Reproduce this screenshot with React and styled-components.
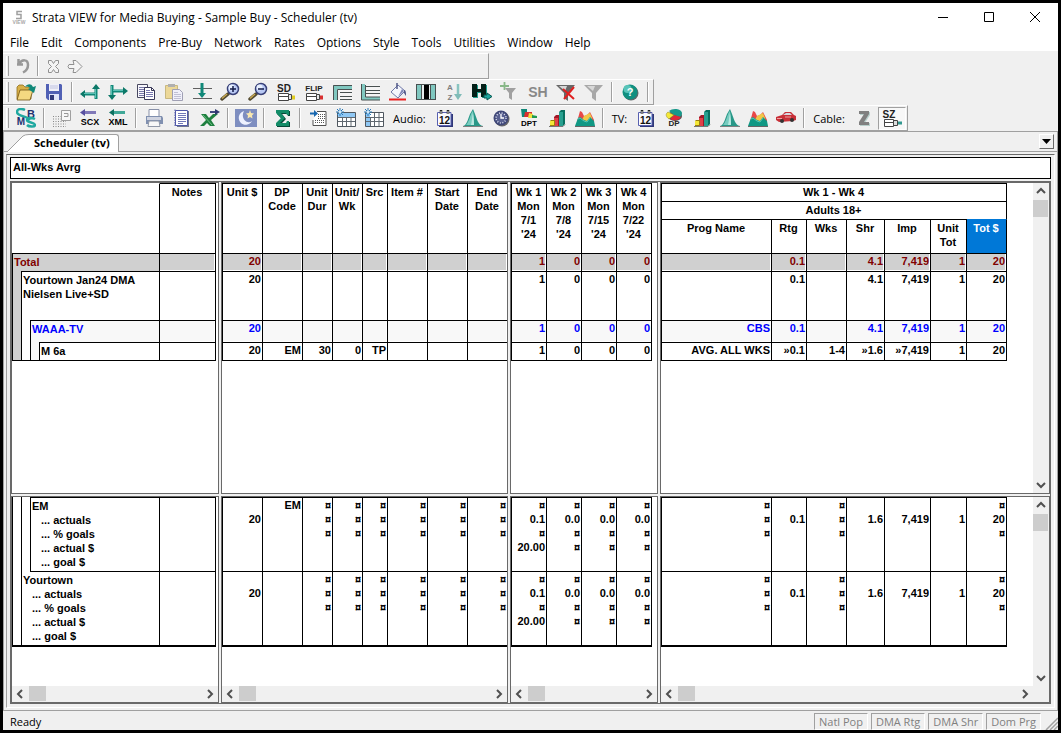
import { useState } from "react";
import styled, { createGlobalStyle, css } from "styled-components";

const GlobalStyle = createGlobalStyle`
  * {
    box-sizing: border-box;
  }
  body {
    margin: 0;
    font-family: "Open Sans", "Noto Sans", sans-serif;
    font-size: 12px;
    color: #000;
  }
  button {
    font: inherit;
    color: inherit;
    border: 0;
    padding: 0;
    background: none;
  }
`;

const Window = styled.div`
  display: flex;
  flex-direction: column;
  height: 100vh;
  border: 3px solid #000;
  background: #f0f0f0;
`;

const TitleBar = styled.header`
  display: flex;
  align-items: center;
  height: 28px;
  padding-left: 8px;
  background: #fff;
`;
const WindowTitle = styled.h1`
  flex: 1;
  margin: 0 0 0 5px;
  font-size: 12px;
  font-weight: 400;
`;
const WindowButton = styled.button`
  display: flex;
  align-items: center;
  justify-content: center;
  width: 46px;
  height: 28px;
`;

const MenuBar = styled.nav`
  display: flex;
  align-items: center;
  height: 20px;
  padding-left: 1px;
  background: #fff;
`;
const MenuItem = styled.button`
  padding: 4px 6px 0;
  line-height: 16px;
`;

const Toolbars = styled.div`
  display: flex;
  flex-direction: column;
  align-items: flex-start;
  padding-top: 2px;
`;
const Bar = styled.div`
  display: flex;
  align-items: center;
  height: 26px;
  min-width: ${(props) => (props.$wide ? "486px" : "0")};
  padding: 0 1px 0 3px;
  border-top: 1px solid #fff;
  border-right: 1px solid #a0a0a0;
  border-bottom: 1px solid #a0a0a0;
`;
const Grip = styled.div`
  width: 3px;
  height: 20px;
  margin-right: 3px;
  border-left: 1px solid #fff;
  border-right: 1px solid #a0a0a0;
`;
const Separator = styled.div`
  width: 2px;
  height: 20px;
  margin: 0 3px;
  border-left: 1px solid #a0a0a0;
  border-right: 1px solid #fff;
`;
const ToolButton = styled.button`
  display: flex;
  align-items: center;
  justify-content: center;
  width: ${(props) => (props.$small ? "22px" : "28px")};
  height: 23px;
  ${(props) =>
    props.$pressed &&
    css`
      background: #f8f8f8;
      border: 1px solid #fff;
      border-top-color: #a0a0a0;
      border-left-color: #a0a0a0;
    `}
`;
const BarLabel = styled.span`
  padding: 0 5px;
  font-size: 11px;
`;

const Workspace = styled.main`
  flex: 1;
  min-height: 0;
  display: flex;
  flex-direction: column;
  border: 1px solid #a0a0a0;
  padding-bottom: 2px;
`;
const TabStrip = styled.div`
  display: flex;
  align-items: flex-end;
  height: 20px;
  padding-left: 3px;
  padding-right: 3px;
  border-bottom: 1px solid #a0a0a0;
`;
const Tab = styled.button`
  display: flex;
  height: 18px;
  margin-bottom: -1px;
`;
const TabLabel = styled.span`
  height: 18px;
  padding: 0 8px 0 5px;
  border-top: 1px solid #a0a0a0;
  border-right: 1px solid #a0a0a0;
  border-top-right-radius: 3px;
  background: #fff;
  font-size: 11px;
  font-weight: 700;
  line-height: 15px;
`;
const TabMenuButton = styled.button`
  display: flex;
  align-items: center;
  justify-content: center;
  width: 15px;
  height: 15px;
  margin: 0 0 2px auto;
  border: 1px solid #696969;
  border-top-color: #fff;
  border-left-color: #fff;
`;

const Client = styled.section`
  flex: 1;
  min-height: 0;
  display: flex;
  flex-direction: column;
  gap: 2px;
  margin: 2px 2px 0;
  padding: 2px 3px 3px;
  border: 1px solid #fff;
  border-top-color: #696969;
  border-left-color: #a0a0a0;
`;
const ViewName = styled.div`
  height: 22px;
  padding-left: 2px;
  border: 1px solid #000;
  background: #fff;
  font: 700 11px/19px "Liberation Sans", Arial, sans-serif;
`;
const Panes = styled.div`
  flex: 1;
  min-height: 0;
  display: grid;
  grid-template-columns: 208px 287px 148px 1fr;
  grid-template-rows: minmax(0, 1fr) 207px;
  gap: 2px;
  border: 1px solid #696969;
`;
const Pane = styled.div`
  display: grid;
  grid-template-columns: minmax(0, 1fr) auto;
  grid-template-rows: minmax(0, 1fr) auto;
  min-width: 0;
  border: 1px solid #696969;
  background: ${(props) => (props.$corner ? "#f0f0f0" : "#fff")};
  overflow: hidden;
`;
const PaneBody = styled.div`
  overflow: hidden;
  background: #fff;
`;

const Track = styled.div`
  display: flex;
  flex-direction: ${(props) => (props.$vertical ? "column" : "row")};
  background: #f0f0f0;
`;
const ArrowButton = styled.button`
  display: flex;
  align-items: center;
  justify-content: center;
  width: 16px;
  height: 16px;
`;
const Thumb = styled.div`
  width: ${(props) => (props.$vertical ? "15px" : "17px")};
  height: ${(props) => (props.$vertical ? "17px" : "15px")};
  margin: ${(props) => (props.$vertical ? "1px 0 auto" : "0 auto 0 1px")};
  background: #cdcdcd;
`;

const Grid = styled.table`
  table-layout: fixed;
  width: ${(props) => props.$width}px;
  border-spacing: 0;
  border-left: ${(props) => (props.$tree ? "0" : "1px solid #000")};
  border-bottom: ${(props) => (props.$thick ? "2px" : "1px")} solid #000;
  font: 700 11px/14px "Liberation Sans", Arial, sans-serif;
`;
const Row = styled.tr`
  height: ${(props) => props.$height}px;
`;
const Head = styled.th`
  padding: 1px 1px 0 0;
  border-top: 1px solid #000;
  border-right: 1px solid #000;
  vertical-align: top;
  white-space: pre-line;
  ${(props) =>
    props.$blank &&
    css`
      border-top-color: #fff;
    `}
  ${(props) =>
    props.$selected &&
    css`
      background: #0078d7;
      border-top-color: #0078d7;
      color: #fff;
    `}
`;

const tones = {
  total: css`
    background-color: #d0d0d0;
    color: #800000;
  `,
  station: css`
    background-color: #f8f8f8;
    color: #0000ff;
  `,
};
const Cell = styled.td`
  padding: 0 1px 0 0;
  border-top: 1px solid #000;
  border-right: 1px solid #000;
  box-shadow: inset -1px -1px #fff;
  text-align: right;
  vertical-align: top;
  white-space: pre;
  ${(props) => tones[props.$tone]}
`;
const TreeCell = styled.td`
  height: inherit;
  padding: 0;
  border-left: 1px solid #000;
  border-right: 1px solid #000;
  vertical-align: top;
`;
const TreeRow = styled.div`
  display: flex;
  height: ${(props) => props.$height}px;
`;
const Level = styled.div`
  width: 9px;
  border-right: 1px solid #000;
  background: ${(props) => props.$color};
`;
const TreeLabel = styled.div`
  flex: 1;
  padding: 2px 0 0 1px;
  background: linear-gradient(#000, #000) ${(props) => (props.$inset ? "8px" : "0")} 0 / 100% 1px
    no-repeat;
  white-space: pre;
  ${(props) => tones[props.$tone]}
`;
const GoalLine = styled.div`
  padding-left: 9px;
`;

const StatusBar = styled.footer`
  display: flex;
  align-items: flex-end;
  gap: 3px;
  height: 19px;
  padding-left: 7px;
`;
const Ready = styled.span`
  flex: 1;
  font-size: 11px;
  line-height: 17px;
`;
const StatusCell = styled.span`
  height: 17px;
  padding: 0 4px;
  border: 1px solid #fff;
  border-top-color: #a0a0a0;
  border-left-color: #a0a0a0;
  color: #808080;
  font-size: 11px;
  line-height: 16px;
`;

const Svg = ({ children, size = 20 }) => (
  <svg width={size} height={size} viewBox={`0 0 ${size} ${size}`} aria-hidden="true">
    {children}
  </svg>
);

const Word = ({ x = 10, y, size = 9, fill = "#222", children }) => (
  <text
    x={x}
    y={y}
    fontSize={size}
    fill={fill}
    textAnchor="middle"
    fontWeight="700"
    fontFamily="Liberation Sans, Arial, sans-serif"
  >
    {children}
  </text>
);

const CalendarIcon = () => (
  <Svg>
    <path d="M4 6h14v13H4z" fill="#303878" />
    <path d="M2.500 4.500h13.500v13H2.500z" fill="#fcfcff" stroke="#5860b0" />
    <path d="M6 2v4M13 2v4" stroke="#222" strokeWidth="2.500" />
    <path d="M6 3v3M13 3v3" stroke="#ddd" />
    <Word x={9.5} y={16} size={10} fill="#111">12</Word>
  </Svg>
);
const BellIcon = () => (
  <Svg>
    <path d="M0 18c4-1 5-7 7-12l3-5 2 5c2 5 3 11 8 12z" fill="#289888" />
    <path d="M3 17c3-3 4-9 6-13l1-1c1 5-1 11 0 14z" fill="#78ccc0" />
    <path d="M8 17c1-4 1-8 2-12 1 4 1 8 1 12z" fill="#b8e8e0" />
    <path d="M0 18.500h20" stroke="#808080" />
  </Svg>
);
const BarsIcon = () => (
  <Svg>
    <path d="M12 4l2-2h4v14l-2 2h-4z" fill="#087060" />
    <path d="M12 4h4v14h-4z" fill="#28a090" />
    <path d="M7 9l2-2h3v11H7z" fill="#a01828" />
    <path d="M7 10h4v8H7z" fill="#e04048" />
    <path d="M3 13l1-1h4v5l-1 1H3z" fill="#988010" />
    <path d="M3 13h4v4H3z" fill="#f4e838" />
    <path d="M2 18.500h14l2-2" fill="none" stroke="#777" />
  </Svg>
);
const HillsIcon = () => (
  <Svg>
    <path d="M2 14L5 3l2 1 2 4 3-1 3-3 4 8v4z" fill="#e84848" />
    <path d="M7 12l2-4 4-2 2-1 2 5 1 6z" fill="#f0c848" />
    <path d="M0 18l3-8 2-1 4 3 3 1 3-4 2 2 2 2 1 5z" fill="#109884" />
    <path d="M3 11l2-1 4 3 3 1 3-4" fill="none" stroke="#58c4b4" />
    <path d="M0 18.500h20" stroke="#666" />
  </Svg>
);
const CalGrid = ({ side }) => (
  <Svg>
    <path d="M1.500 4.500h18v14h-18z" fill="#fff" stroke="#505860" />
    <path d={side ? "M2 5h4v13H2z" : "M2 5h17v4H2z"} fill="#90c8f4" />
    <path d="M2 9.500h17M2 13.500h17M6.500 9v9M10.500 9v9M15 9v9" stroke="#606870" />
    {side && <path d="M10.500 5v4M15 5v4" stroke="#606870" />}
    <path d="M4 0v8M1 1l6 6M7 1L1 7M0 4h8" stroke="#2878b8" />
    <circle cx="4" cy="4" r="1.500" fill="#d0e8fa" />
  </Svg>
);
const Funnel = ({ color, light }) => (
  <>
    <path d="M0 3h19l-7 8v8l-4-3v-5z" fill={color} />
    <path d="M3 4h8L9 9z" fill={light} />
  </>
);
const Magnifier = ({ plus }) => (
  <Svg>
    <path d="M2 17l6-5" stroke="#504830" strokeWidth="3.500" strokeLinecap="round" />
    <path d="M2 16.500l5-4.500" stroke="#c8a850" strokeWidth="1.500" />
    <circle cx="13" cy="7" r="5.500" fill="#b8c8f4" stroke="#384078" strokeWidth="1.500" />
    <circle cx="11.500" cy="5.500" r="3" fill="#e8f0ff" />
    <path d={plus ? "M10 7h6M13 4v6" : "M10 7h6"} stroke="#101848" strokeWidth="1.500" />
  </Svg>
);
const Sheet = ({ mark }) => (
  <>
    <path d="M2.500 11.500h10v7h-10zM3 14.500h9" fill="#fff" stroke="#444" />
    <path d="M12.500 12.500h3v5h-3z" fill="#e8e8e8" stroke="#444" />
    <path d="M16 15.500h3" stroke={mark} strokeWidth="4" />
  </>
);

const icons = {
  undo: (
    <Svg>
      <path d="M5.500 3v6M4 8.500h6M6 8C9 3 15 3 15 9c0 3-2 6-5 7.500" fill="none" stroke="#989898" strokeWidth="2.500" />
    </Svg>
  ),
  cancel: (
    <Svg>
      <path
        d="M5.500 4.500h3l2 3 2-3h3v3l-3 3 3 3v3h-3l-2-3-2 3h-3v-3l3-3-3-3z"
        fill="#f4f4f4"
        stroke="#909090"
      />
    </Svg>
  ),
  next: (
    <Svg>
      <path d="M4 8.500h5l-1-4h3l6 6-6 6H8l1-4H4l-1-2z" fill="#f4f4f4" stroke="#909090" />
    </Svg>
  ),
  open: (
    <Svg>
      <path d="M1 17V5l2-2h4l2 2h6v12z" fill="#d8b048" stroke="#907020" strokeWidth=".8" />
      <path d="M1 18L4 8h13l-3 10z" fill="#f4d880" stroke="#705010" strokeWidth=".8" />
      <path d="M9 5c2-3 6-4 8 0l3-1-2 7-6-4 2-1c-1-1-3-2-5-1z" fill="#108878" />
    </Svg>
  ),
  save: (
    <Svg>
      <path d="M2 2h15l1 1v15H4l-2-2z" fill="#5060b4" />
      <path d="M5 2h10v7H5z" fill="#f0f0f8" />
      <path d="M6 4h8M6 6h8" stroke="#c0c4e0" />
      <path d="M5 12h10v6H5z" fill="#e0e4f8" />
      <path d="M6 13h4v5H6z" fill="#303878" />
    </Svg>
  ),
  arrowUp: (
    <Svg>
      <path d="M16 17V6M2 12h14" stroke="#108878" strokeWidth="3" />
      <path d="M0 12l5-4v8zM16 2l4 5h-8z" fill="#0c7868" />
      <path d="M4 11.500h11M15.500 7v9" stroke="#58c0b4" />
    </Svg>
  ),
  arrowDown: (
    <Svg>
      <path d="M4 3v12M4 9h13" stroke="#108878" strokeWidth="3" />
      <path d="M20 9l-5-4v8zM4 18l4-5H0z" fill="#0c7868" />
      <path d="M5 8.500h10M3.500 4v9" stroke="#58c0b4" />
    </Svg>
  ),
  copy: (
    <Svg>
      <path d="M1.500 2.500h10v13h-10z" fill="#f8f8fc" stroke="#484860" />
      <path d="M3 5.500h6M3 7.500h5M3 9.500h5M3 11.500h5M3 13.500h5" stroke="#7878a8" />
      <path d="M8.500 5.500h7l3 3v9h-10z" fill="#fff" stroke="#383858" />
      <path d="M10 8.500h4M10 10.500h7M10 12.500h7M10 14.500h7" stroke="#7878b0" />
      <path d="M15.500 5.500v3h3" fill="none" stroke="#383858" />
    </Svg>
  ),
  paste: (
    <Svg>
      <path d="M1.500 3.500h12v13h-12z" fill="#ecd898" stroke="#c8b880" />
      <path d="M4 2h7v3H4z" fill="#b0b0b0" />
      <path d="M8.500 7.500h7l3 3v8h-10z" fill="#f0f0fa" stroke="#a0a0b4" />
      <path d="M10 10.500h4M10 12.500h7M10 14.500h7M10 16.500h7" stroke="#c0c0d4" />
    </Svg>
  ),
  split: (
    <Svg>
      <path d="M1 6.500h19M1 16.500h19" stroke="#606060" />
      <path d="M10 1v11" stroke="#108878" strokeWidth="3" />
      <path d="M10 16l-4-5h8z" fill="#108878" />
    </Svg>
  ),
  zoomIn: <Magnifier plus />,
  zoomOut: <Magnifier />,
  sd: (
    <Svg>
      <Sheet mark="#e0cc20" />
      <Word x={8} y={10} size={10}>SD</Word>
    </Svg>
  ),
  flip: (
    <Svg>
      <Sheet mark="#d83030" />
      <Word x={10} y={9} size={8}>FLIP</Word>
    </Svg>
  ),
  rows: (
    <Svg>
      <path d="M1 3h19v4H1zM1 3h4v15H1z" fill="#80c8c0" />
      <path d="M5 7h15v11H5z" fill="#f4f4f4" />
      <path d="M1.500 18V3.500H20M5.500 18V7.500H20M8 10.500h12M8 14.500h12M8 17.500h12" fill="none" stroke="#485050" />
    </Svg>
  ),
  indent: (
    <Svg>
      <path d="M1 2h4v16H1zM1 15h19v3H1z" fill="#80c8c0" />
      <path d="M5 3h15v12H5z" fill="#f4f4f4" />
      <path d="M1.500 2v16H20M5.500 3v12H20M6 4.500h14M6 8.500h14M6 11.500h14" fill="none" stroke="#485050" />
    </Svg>
  ),
  fill: (
    <Svg>
      <path d="M3 10l7-7 7 6-7 7z" fill="#f4f6fc" stroke="#7078a8" />
      <path d="M10 15l6-6-2-2-4 8z" fill="#8088b8" />
      <path d="M9 1v6" stroke="#505888" strokeWidth="1.500" />
      <path d="M16 8c2 0 2 3 2 6l-2-3z" fill="#505888" />
      <path d="M1 17.500h17" stroke="#e82020" strokeWidth="2" />
    </Svg>
  ),
  columns: (
    <Svg>
      <path d="M0 2h20v16H0z" fill="#485050" />
      <path d="M1 3h4v14H1zM15 3h4v14h-4z" fill="#80c8c0" />
      <path d="M6 3h2v14H6zM13 3h1v14h-1z" fill="#e8eeee" />
      <path d="M8 3h5v14H8z" fill="#000" />
    </Svg>
  ),
  sort: (
    <Svg>
      <Word x={6} y={8} size={8} fill="#808080">A</Word>
      <Word x={6} y={18} size={8} fill="#808080">Z</Word>
      <path d="M14 2v12" stroke="#88c4c0" strokeWidth="2.500" />
      <path d="M10 12l4 6 4-6z" fill="#80bcb8" />
    </Svg>
  ),
  header: (
    <Svg>
      <path d="M1 3h5v5h4V3h5v13h-5v-5H6v5H1z" fill="#20a090" />
      <path d="M0 2h5v5h4V2h5v13H9v-5H5v5H0z" fill="#042018" />
      <path d="M12 13h3v-2l5 3.500-5 3.500v-2h-3z" fill="#20a8a0" stroke="#085850" />
    </Svg>
  ),
  addFilter: (
    <Svg>
      <path d="M4.500 0v8M0 4h9" stroke="#88b888" strokeWidth="1.800" />
      <path d="M5 6h11l-4 5v7l-3-2v-5z" fill="#a0a0a0" />
    </Svg>
  ),
  sh: (
    <Svg>
      <Word y={15} size={14} fill="#888">SH</Word>
    </Svg>
  ),
  clearFilter: (
    <Svg>
      <Funnel color="#686868" light="#d8d8d8" />
      <path d="M7 7l11 10M18 5L8 17" stroke="#e02020" strokeWidth="2" />
    </Svg>
  ),
  filter: (
    <Svg>
      <Funnel color="#a8a8a8" light="#d8d8d8" />
    </Svg>
  ),
  help: (
    <Svg>
      <circle cx="11" cy="11" r="7.500" fill="#606868" />
      <circle cx="10" cy="10" r="7.500" fill="#109080" />
      <circle cx="7.500" cy="7" r="4" fill="#58c4b8" />
      <Word y={14} size={11} fill="#fff">?</Word>
    </Svg>
  ),
  sbms: (
    <Svg>
      <Word x={15} y={10} size={11} fill="#203070">B</Word>
      <Word x={5} y={17} size={10} fill="#203070">M</Word>
      <path d="M9 2C5 0 1 1 1 4c0 5 10 3 13 8M19 11c-4-2-8-1-8 1 0 3 8 2 8 5 0 2-6 2-8 0" fill="none" stroke="#20a8a0" strokeWidth="2.500" />
    </Svg>
  ),
  form: (
    <Svg>
      <path d="M9.500 2.500h9v10h-9z" fill="#f8f8f8" stroke="#a0a0a0" />
      <path d="M12 5.500h4v3h-4" fill="none" stroke="#989898" />
      <path d="M1 8.500h8M1 11h8M1 13.500h13M1 16h13M1 18.500h13" stroke="#888" strokeDasharray="1 1.500" />
    </Svg>
  ),
  scx: (
    <Svg>
      <path d="M4 4.500h12" stroke="#8078b8" strokeWidth="3" />
      <path d="M0 4.500L5 1v7z" fill="#5850a0" />
      <Word y={17} size={9} fill="#000">SCX</Word>
    </Svg>
  ),
  xml: (
    <Svg>
      <path d="M4 4.500h13" stroke="#40a898" strokeWidth="3" />
      <path d="M1 4.500L6 1v7z" fill="#0c7060" />
      <Word y={17} size={9} fill="#000">XML</Word>
    </Svg>
  ),
  print: (
    <Svg>
      <path d="M5 8V1.500h10V8" fill="#fff" stroke="#8890a8" />
      <path d="M2 8h16l1 2v6H2z" fill="#8090b0" />
      <path d="M3 9h14v3H3z" fill="#d0d4e0" />
      <path d="M5 13h10l1 5.500H4z" fill="#f8f8f8" stroke="#9098a8" />
    </Svg>
  ),
  page: (
    <Svg>
      <path d="M5 3h12v16H5z" fill="#707890" />
      <path d="M3.500 2.500h12v15h-12z" fill="#fff" stroke="#5058a8" />
      <path d="M3 1.500v17" stroke="#5058a8" strokeDasharray="1.500 1" />
      <path d="M6 5.500h8M6 7.500h8M6 9.500h8M6 11.500h8M6 13.500h8M6 15.500h5" stroke="#7078b8" />
    </Svg>
  ),
  excel: (
    <Svg>
      <path d="M1 6h5l3 4 4-4h5l-7 6 4 6h-5l-3-3-3 3H0l6-6z" fill="#208040" />
      <path d="M3 7l9 10" stroke="#68c080" />
      <path d="M10 4h6" stroke="#404880" strokeWidth="2" />
      <path d="M20 4l-5-3v6z" fill="#303870" />
    </Svg>
  ),
  moon: (
    <svg width="22" height="18" viewBox="0 0 22 18" aria-hidden="true">
      <path d="M0 0h22v18H0z" fill="#7e8ec0" />
      <path d="M9 2a7 7 0 1 0 8 10c-5 4-12-3-8-10z" fill="#eef2ff" />
      <path d="M15 1l1 3 3 .500-2 2 .500 3-2.500-1.500-2.500 1.500.500-3-2-2 3-.500z" fill="#f8e8b0" />
    </svg>
  ),
  sigma: (
    <Svg>
      <path d="M5 3h13v5h-2l-1-2h-5l4 5-5 5h6l1-2h2v5H5v-3l5-5-5-5z" fill="#084838" />
      <path d="M4 2h13v5h-2l-1-2H9l4 5-5 5h6l1-2h2v5H4v-3l5-5-5-5z" fill="#148c68" />
    </Svg>
  ),
  importGrid: (
    <Svg>
      <path d="M9 3.500h9v14H5V12" fill="#fff" stroke="#505050" />
      <path d="M7 14.500h10M7 12.500h10M10 6.500h7M10 8.500h7M10 10.500h7" stroke="#555" strokeDasharray="1 1" />
      <path d="M2 5.500h4" stroke="#1868b0" strokeWidth="2" />
      <path d="M10 5.500L6 2v7z" fill="#1868b0" />
    </Svg>
  ),
  calTop: <CalGrid />,
  calSide: <CalGrid side />,
  calendar: <CalendarIcon />,
  bell: <BellIcon />,
  clock: (
    <Svg>
      <circle cx="11" cy="11" r="7.500" fill="#686868" />
      <circle cx="10" cy="10" r="7.500" fill="#404878" />
      <circle cx="10" cy="10" r="5" fill="#586090" stroke="#e0e4f4" strokeWidth="1.500" strokeDasharray="1 1.620" />
      <path d="M10 6v4h3" fill="none" stroke="#fff" strokeWidth="1.300" />
    </Svg>
  ),
  dpt: (
    <Svg>
      <path d="M2 1h6v8H3z" fill="#108878" />
      <path d="M6 4h7v5H5z" fill="#d83030" />
      <path d="M10 5l4 1v4H9z" fill="#f0e040" />
      <path d="M13 7l5 1v2h-5z" fill="#209850" />
      <Word y={18} size={8} fill="#000">DPT</Word>
    </Svg>
  ),
  bars: <BarsIcon />,
  hills: <HillsIcon />,
  dp: (
    <Svg>
      <ellipse cx="11" cy="8" rx="7" ry="5" fill="#505050" />
      <path d="M10 7L5 3c3-3 12-3 13 2 0 2-1 3-2 4z" fill="#18988a" />
      <path d="M10 7l7 2c-2 4-8 4-11 2z" fill="#e02838" />
      <path d="M10 7L4 4C1 6 2 9 5 11z" fill="#f4e838" stroke="#888020" strokeWidth=".5" />
      <Word y={18} size={8}>DP</Word>
    </Svg>
  ),
  car: (
    <Svg>
      <path d="M0 9l6-2 3-3h6l3 3 2 1v4l-3 1-14 1-3-2z" fill="#c83038" />
      <path d="M7 7l3-2h4l2 2z" fill="#d8d8e0" />
      <path d="M1 10.500h5M9 9h6" stroke="#eea0a0" />
      <circle cx="6" cy="13" r="2" fill="#333" />
      <circle cx="16" cy="12" r="2" fill="#333" />
    </Svg>
  ),
  z: (
    <Svg>
      <path d="M6 4h10v3l-5 8h5v3H6v-3l5-8H6z" fill="#b8d0cc" />
      <path d="M5 3h10v3l-5 8h5v3H5v-3l5-8H5z" fill="#808080" />
    </Svg>
  ),
  sz: (
    <Svg>
      <path d="M2.500 11.500h9v7h-9zM2 14.500h10" fill="#fff" stroke="#444" />
      <path d="M11.500 12.500h4v5h-4z" fill="#ddd" stroke="#444" />
      <path d="M16 15h4" stroke="#309890" strokeWidth="3" />
      <Word x={7} y={10} size={10}>SZ</Word>
    </Svg>
  ),
};

// "|" draws a separator, "Name:" draws a caption
const toolbars = [
  ["undo", "|", "cancel", "next"],
  [
    "open", "save", "|", "arrowUp", "arrowDown", "copy", "paste", "split", "zoomIn", "zoomOut",
    "sd", "flip", "rows", "indent", "fill", "columns", "sort", "header", "addFilter", "sh",
    "clearFilter", "filter", "|", "help", "|",
  ],
  [
    "sbms", "|", "form", "scx", "xml", "|", "print", "page", "excel", "|", "moon", "|", "sigma",
    "|", "importGrid", "calTop", "calSide", "Audio:", "calendar", "bell", "clock", "dpt", "bars",
    "hills", "|", "TV:", "calendar", "dp", "bars", "bell", "hills", "car", "|", "Cable:", "z", "sz",
  ],
];

const menus = [
  "File", "Edit", "Components", "Pre-Buy", "Network", "Rates", "Options", "Style", "Tools",
  "Utilities", "Window", "Help",
];

const rowTypes = [
  { tone: "total", height: 18 },
  { tone: "plain", height: 49 },
  { tone: "station", height: 22 },
  { tone: "plain", height: 18 },
];

const unitPane = {
  widths: [40, 40, 30, 30, 25, 40, 40, 40],
  heads: ["Unit $", "DP\nCode", "Unit\nDur", "Unit/\nWk", "Src", "Item #", "Start\nDate", "End\nDate"],
  rows: [
    ["20", "", "", "", "", "", "", ""],
    ["20", "", "", "", "", "", "", ""],
    ["20", "", "", "", "", "", "", ""],
    ["20", "EM", "30", "0", "TP", "", "", ""],
  ],
  goals: [
    ["\n20", "EM", "¤\n¤\n¤", "¤\n¤\n¤", "¤\n¤\n¤", "¤\n¤\n¤", "¤\n¤\n¤", "¤\n¤\n¤"],
    ["\n20", "", "¤\n¤\n¤", "¤\n¤\n¤", "¤\n¤\n¤", "¤\n¤\n¤", "¤\n¤\n¤", "¤\n¤\n¤"],
  ],
};

const weekGoals = ["¤\n0.1\n¤\n20.00", "¤\n0.0\n¤\n¤", "¤\n0.0\n¤\n¤", "¤\n0.0\n¤\n¤"];
const weekPane = {
  widths: [35, 35, 35, 35],
  heads: ["Wk 1\nMon\n7/1\n'24", "Wk 2\nMon\n7/8\n'24", "Wk 3\nMon\n7/15\n'24", "Wk 4\nMon\n7/22\n'24"],
  rows: Array(4).fill(["1", "0", "0", "0"]),
  goals: [weekGoals, weekGoals],
};

const demoGoals = ["¤\n¤\n¤", "\n0.1", "¤\n¤\n¤", "\n1.6", "\n7,419", "\n1", "¤\n20\n¤"];
const demoPane = {
  widths: [110, 35, 40, 38, 46, 36, 40],
  groups: ["Wk 1 - Wk 4", "Adults 18+"],
  heads: ["Prog Name", "Rtg", "Wks", "Shr", "Imp", "Unit\nTot", "Tot $"],
  selected: "Tot $",
  rows: [
    ["", "0.1", "", "4.1", "7,419", "1", "20"],
    ["", "0.1", "", "4.1", "7,419", "1", "20"],
    ["CBS", "0.1", "", "4.1", "7,419", "1", "20"],
    ["AVG. ALL WKS", "»0.1", "1-4", "»1.6", "»7,419", "1", "20"],
  ],
  goals: [demoGoals, demoGoals],
};

const tree = [
  { label: "Total", levels: [] },
  { label: "Yourtown Jan24 DMA\nNielsen Live+SD", levels: ["#d0d0d0"] },
  { label: "WAAA-TV", levels: ["#d0d0d0", "#fff"] },
  { label: "M 6a", levels: ["#d0d0d0", "#fff", "#f8f8f8"] },
];
const goalTree = [
  { label: "EM", levels: ["#fff", "#fff"] },
  { label: "Yourtown", levels: ["#fff"] },
];
const goalLines = ["... actuals", "... % goals", "... actual $", "... goal $"];

const Columns = ({ widths }) => (
  <colgroup>
    {widths.map((width, i) => (
      <col key={i} width={width} />
    ))}
  </colgroup>
);

const sum = (list) => list.reduce((a, b) => a + b, 0);

const Chevron = ({ dir }) => {
  const paths = {
    up: "M4 10l4-4 4 4",
    down: "M4 6l4 4 4-4",
    left: "M10 4L6 8l4 4",
    right: "M6 4l4 4-4 4",
  };
  return (
    <Svg size={16}>
      <path d={paths[dir]} fill="none" stroke="#505050" strokeWidth="2" />
    </Svg>
  );
};

const ScrollBar = ({ vertical }) => (
  <Track $vertical={vertical}>
    <ArrowButton aria-label={vertical ? "Scroll up" : "Scroll left"}>
      <Chevron dir={vertical ? "up" : "left"} />
    </ArrowButton>
    <Thumb $vertical={vertical} />
    <ArrowButton aria-label={vertical ? "Scroll down" : "Scroll right"}>
      <Chevron dir={vertical ? "down" : "right"} />
    </ArrowButton>
  </Track>
);

const TreeTable = () => (
  <Grid $width={204} $tree>
    <Columns widths={[148, 56]} />
    <thead>
      <Row $height={70}>
        <Head $blank />
        <Head>Notes</Head>
      </Row>
    </thead>
    <tbody>
      {tree.map(({ label, levels }, i) => (
        <Row key={label} $height={rowTypes[i].height}>
          <TreeCell>
            <TreeRow $height={rowTypes[i].height}>
              {levels.map((color, n) => (
                <Level key={n} $color={color} />
              ))}
              <TreeLabel $tone={rowTypes[i].tone}>{label}</TreeLabel>
            </TreeRow>
          </TreeCell>
          <Cell $tone={rowTypes[i].tone} />
        </Row>
      ))}
    </tbody>
  </Grid>
);

const GoalTreeTable = () => (
  <Grid $width={204} $tree $thick>
    <Columns widths={[148, 56]} />
    <tbody>
      {goalTree.map(({ label, levels }, i) => (
        <Row key={label} $height={74}>
          <TreeCell>
            <TreeRow $height={74}>
              {levels.map((color, n) => (
                <Level key={n} $color={color} />
              ))}
              <TreeLabel $inset={i > 0}>
                {label}
                {goalLines.map((line) => (
                  <GoalLine key={line}>{line}</GoalLine>
                ))}
              </TreeLabel>
            </TreeRow>
          </TreeCell>
          <Cell />
        </Row>
      ))}
    </tbody>
  </Grid>
);

const DataTable = ({ pane }) => (
  <Grid $width={sum(pane.widths) + 1}>
    <Columns widths={pane.widths} />
    <thead>
      {pane.groups?.map((group) => (
        <Row key={group} $height={18}>
          <Head colSpan={pane.widths.length}>{group}</Head>
        </Row>
      ))}
      <Row $height={pane.groups ? 34 : 70}>
        {pane.heads.map((head) => (
          <Head key={head} $selected={head === pane.selected}>
            {head}
          </Head>
        ))}
      </Row>
    </thead>
    <tbody>
      {pane.rows.map((row, i) => (
        <Row key={i} $height={rowTypes[i].height}>
          {row.map((value, n) => (
            <Cell key={n} $tone={rowTypes[i].tone}>
              {value}
            </Cell>
          ))}
        </Row>
      ))}
    </tbody>
  </Grid>
);

const GoalTable = ({ pane }) => (
  <Grid $width={sum(pane.widths) + 1} $thick>
    <Columns widths={pane.widths} />
    <tbody>
      {pane.goals.map((row, i) => (
        <Row key={i} $height={74}>
          {row.map((value, n) => (
            <Cell key={n}>{value}</Cell>
          ))}
        </Row>
      ))}
    </tbody>
  </Grid>
);

const App = () => {
  const [sizeMode, setSizeMode] = useState(true);

  return (
    <Window>
      <GlobalStyle />
      <TitleBar>
        <svg width="16" height="18" viewBox="0 0 16 18" aria-hidden="true">
          <path d="M11 3.500H6v3h4v4H5" fill="none" stroke="#a0a0a0" strokeWidth="1.500" />
          <Word x={8} y={16} size={5} fill="#a8a8a8">VIEW</Word>
        </svg>
        <WindowTitle>Strata VIEW for Media Buying - Sample Buy - Scheduler (tv)</WindowTitle>
        <WindowButton aria-label="Minimize">
          <Svg size={12}>
            <path d="M1 6.500h10" stroke="#000" />
          </Svg>
        </WindowButton>
        <WindowButton aria-label="Maximize">
          <Svg size={12}>
            <path d="M1.500 1.500h9v9h-9z" fill="none" stroke="#000" />
          </Svg>
        </WindowButton>
        <WindowButton aria-label="Close">
          <Svg size={12}>
            <path d="M1 1l10 10M11 1L1 11" stroke="#000" />
          </Svg>
        </WindowButton>
      </TitleBar>
      <MenuBar>
        {menus.map((menu) => (
          <MenuItem key={menu}>{menu}</MenuItem>
        ))}
      </MenuBar>
      <Toolbars>
        {toolbars.map((items, row) => (
          <Bar key={row} $wide={row === 0}>
            <Grip />
            {items.map((item, i) => {
              if (item === "|") return <Separator key={i} />;
              if (item.endsWith(":")) return <BarLabel key={i}>{item}</BarLabel>;
              return (
                <ToolButton
                  key={i}
                  aria-label={item}
                  $small={row === 0}
                  $pressed={item === "sz" && sizeMode}
                  onClick={item === "sz" ? () => setSizeMode(!sizeMode) : undefined}
                >
                  {icons[item]}
                </ToolButton>
              );
            })}
          </Bar>
        ))}
      </Toolbars>
      <Workspace>
        <TabStrip>
          <Tab>
            <svg width="22" height="18" viewBox="0 0 22 18" aria-hidden="true">
              <path d="M0 18L16 2q2-1.500 6-1.500V18z" fill="#fff" />
              <path d="M0 18L16 2q2-1.500 6-1.500" fill="none" stroke="#a0a0a0" />
            </svg>
            <TabLabel>Scheduler (tv)</TabLabel>
          </Tab>
          <TabMenuButton aria-label="Open windows">
            <svg width="9" height="5" viewBox="0 0 9 5" aria-hidden="true">
              <path d="M0 0h9L4.500 5z" />
            </svg>
          </TabMenuButton>
        </TabStrip>
        <Client>
          <ViewName>All-Wks Avrg</ViewName>
          <Panes>
            <Pane>
              <PaneBody>
                <TreeTable />
              </PaneBody>
            </Pane>
            <Pane>
              <PaneBody>
                <DataTable pane={unitPane} />
              </PaneBody>
            </Pane>
            <Pane>
              <PaneBody>
                <DataTable pane={weekPane} />
              </PaneBody>
            </Pane>
            <Pane>
              <PaneBody>
                <DataTable pane={demoPane} />
              </PaneBody>
              <ScrollBar vertical />
            </Pane>
            <Pane>
              <PaneBody>
                <GoalTreeTable />
              </PaneBody>
              <span />
              <ScrollBar />
            </Pane>
            <Pane>
              <PaneBody>
                <GoalTable pane={unitPane} />
              </PaneBody>
              <span />
              <ScrollBar />
            </Pane>
            <Pane>
              <PaneBody>
                <GoalTable pane={weekPane} />
              </PaneBody>
              <span />
              <ScrollBar />
            </Pane>
            <Pane $corner>
              <PaneBody>
                <GoalTable pane={demoPane} />
              </PaneBody>
              <ScrollBar vertical />
              <ScrollBar />
            </Pane>
          </Panes>
        </Client>
      </Workspace>
      <StatusBar>
        <Ready>Ready</Ready>
        {["Natl Pop", "DMA Rtg", "DMA Shr", "Dom Prg"].map((name) => (
          <StatusCell key={name}>{name}</StatusCell>
        ))}
        <Svg size={14}>
          <path d="M2 14L14 2M6 14l8-8M10 14l4-4" stroke="#a0a0a0" strokeWidth="1.500" />
        </Svg>
      </StatusBar>
    </Window>
  );
};

export default App;
